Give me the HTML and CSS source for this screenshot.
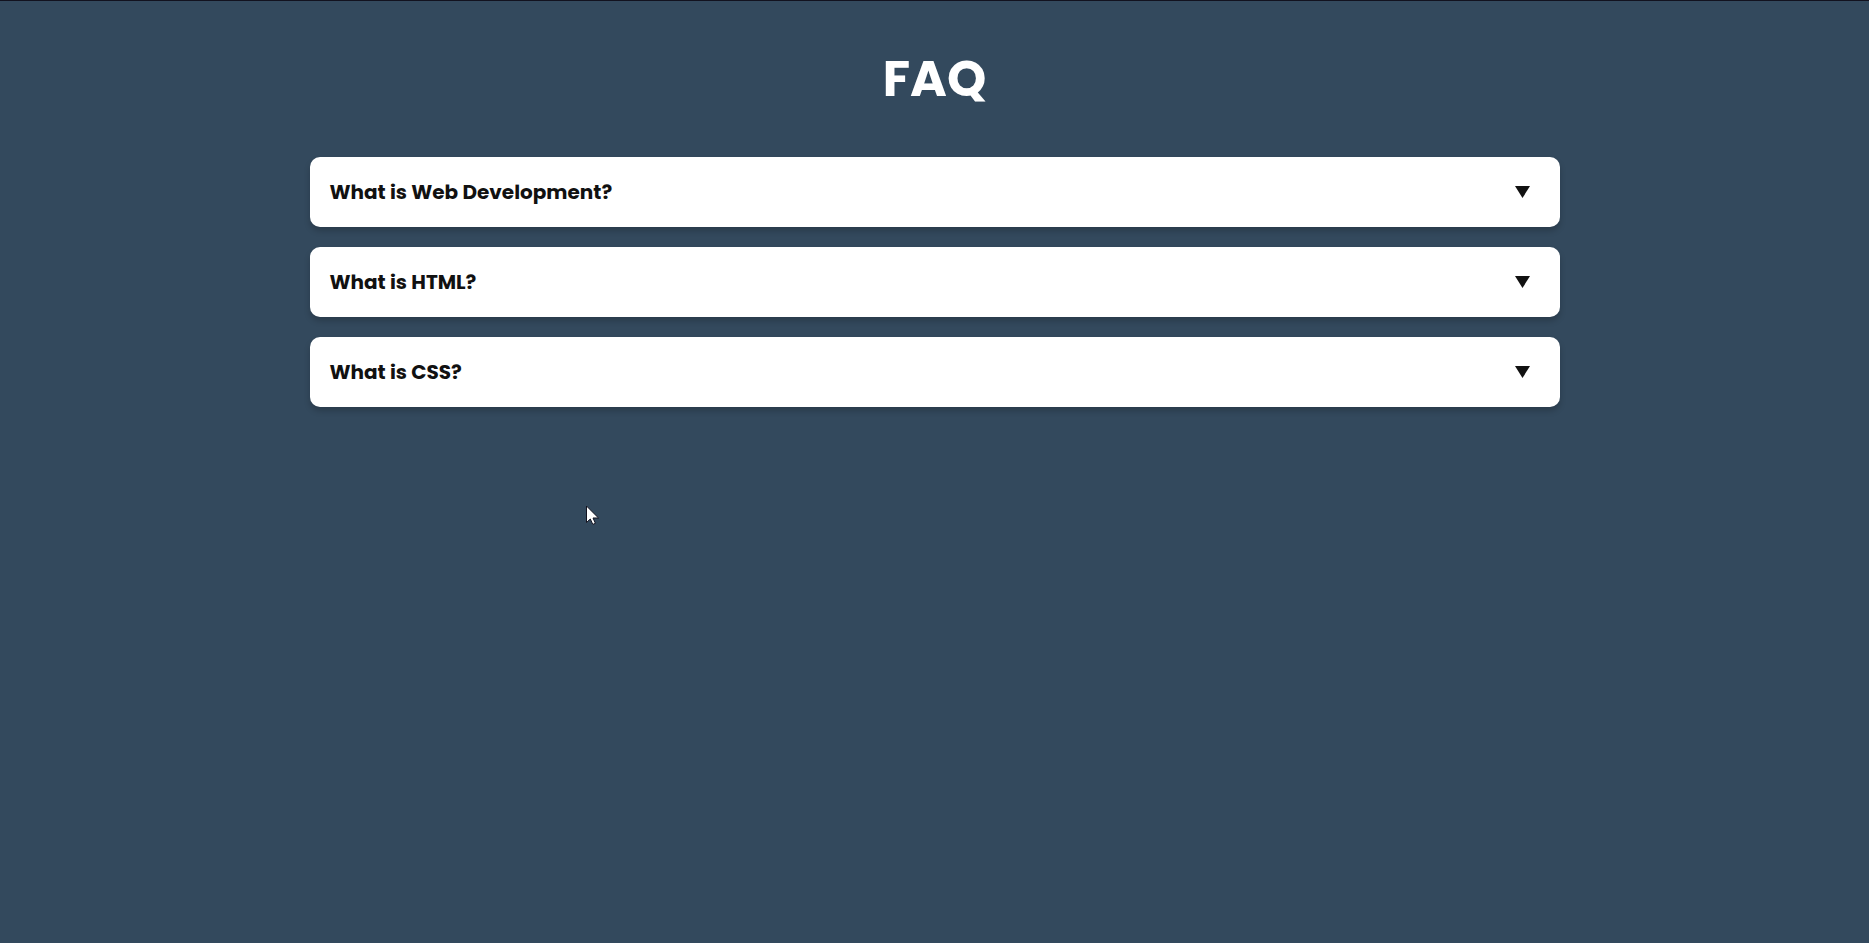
FILE: index.html
```html
<!DOCTYPE html>
<html lang="en">
<head>
  <meta charset="utf-8">
  <meta name="viewport" content="width=device-width, initial-scale=1">
  <title>FAQ</title>
  <link rel="stylesheet" href="styles.css">
</head>
<body>
  <main class="faq">
    <h1 class="faq-title">FAQ</h1>
    <div class="faq-list">
      <button class="question" type="button" aria-expanded="false">
        <span>What is Web Development?</span>
        <svg class="arrow" viewBox="0 0 15 12" aria-hidden="true"><path d="M0 0h15L7.500 12z"/></svg>
      </button>
      <button class="question" type="button" aria-expanded="false">
        <span>What is HTML?</span>
        <svg class="arrow" viewBox="0 0 15 12" aria-hidden="true"><path d="M0 0h15L7.500 12z"/></svg>
      </button>
      <button class="question" type="button" aria-expanded="false">
        <span>What is CSS?</span>
        <svg class="arrow" viewBox="0 0 15 12" aria-hidden="true"><path d="M0 0h15L7.500 12z"/></svg>
      </button>
    </div>
  </main>
  <svg class="pointer" viewBox="0 0 13 20" aria-hidden="true"><path d="M.5 1v16.500L4.300 14l2.500 5.400 2.600-1.100-2.400-5.300h5.500z"/></svg>
</body>
</html>
```
FILE: styles.css
```css
* {
  box-sizing: border-box;
}

body {
  min-height: 100vh;
  margin: 0;
  border-top: 1px solid #12121f;
  background: #33495d;
  color: #111;
  font-family: Poppins, Inter, sans-serif;
}

.faq {
  max-width: 1290px;
  margin: 0 auto;
  padding: 40px 20px;
}

.faq-title {
  margin: 0 0 40px;
  color: #fff;
  font-size: 50px;
  font-weight: 700;
  line-height: 76px;
  text-align: center;
}

.faq-list {
  display: grid;
  gap: 20px;
}

.question {
  display: flex;
  align-items: center;
  justify-content: space-between;
  width: 100%;
  min-height: 70px;
  padding: 20px 30px 20px 20px;
  border: 0;
  border-radius: 10px;
  background: #fff;
  box-shadow: 0 4px 6px rgba(0, 0, 0, 0.2);
  color: inherit;
  font: inherit;
  font-size: 20px;
  font-weight: 700;
  line-height: 30px;
  text-align: left;
  cursor: pointer;
}

.arrow {
  flex: none;
  width: 15px;
  height: 12px;
  fill: currentColor;
}

.pointer {
  position: absolute;
  top: 505px;
  left: 586px;
  width: 13px;
  height: 20px;
  fill: #fff;
  stroke: #12121f;
  stroke-width: 1;
  pointer-events: none;
}
```
